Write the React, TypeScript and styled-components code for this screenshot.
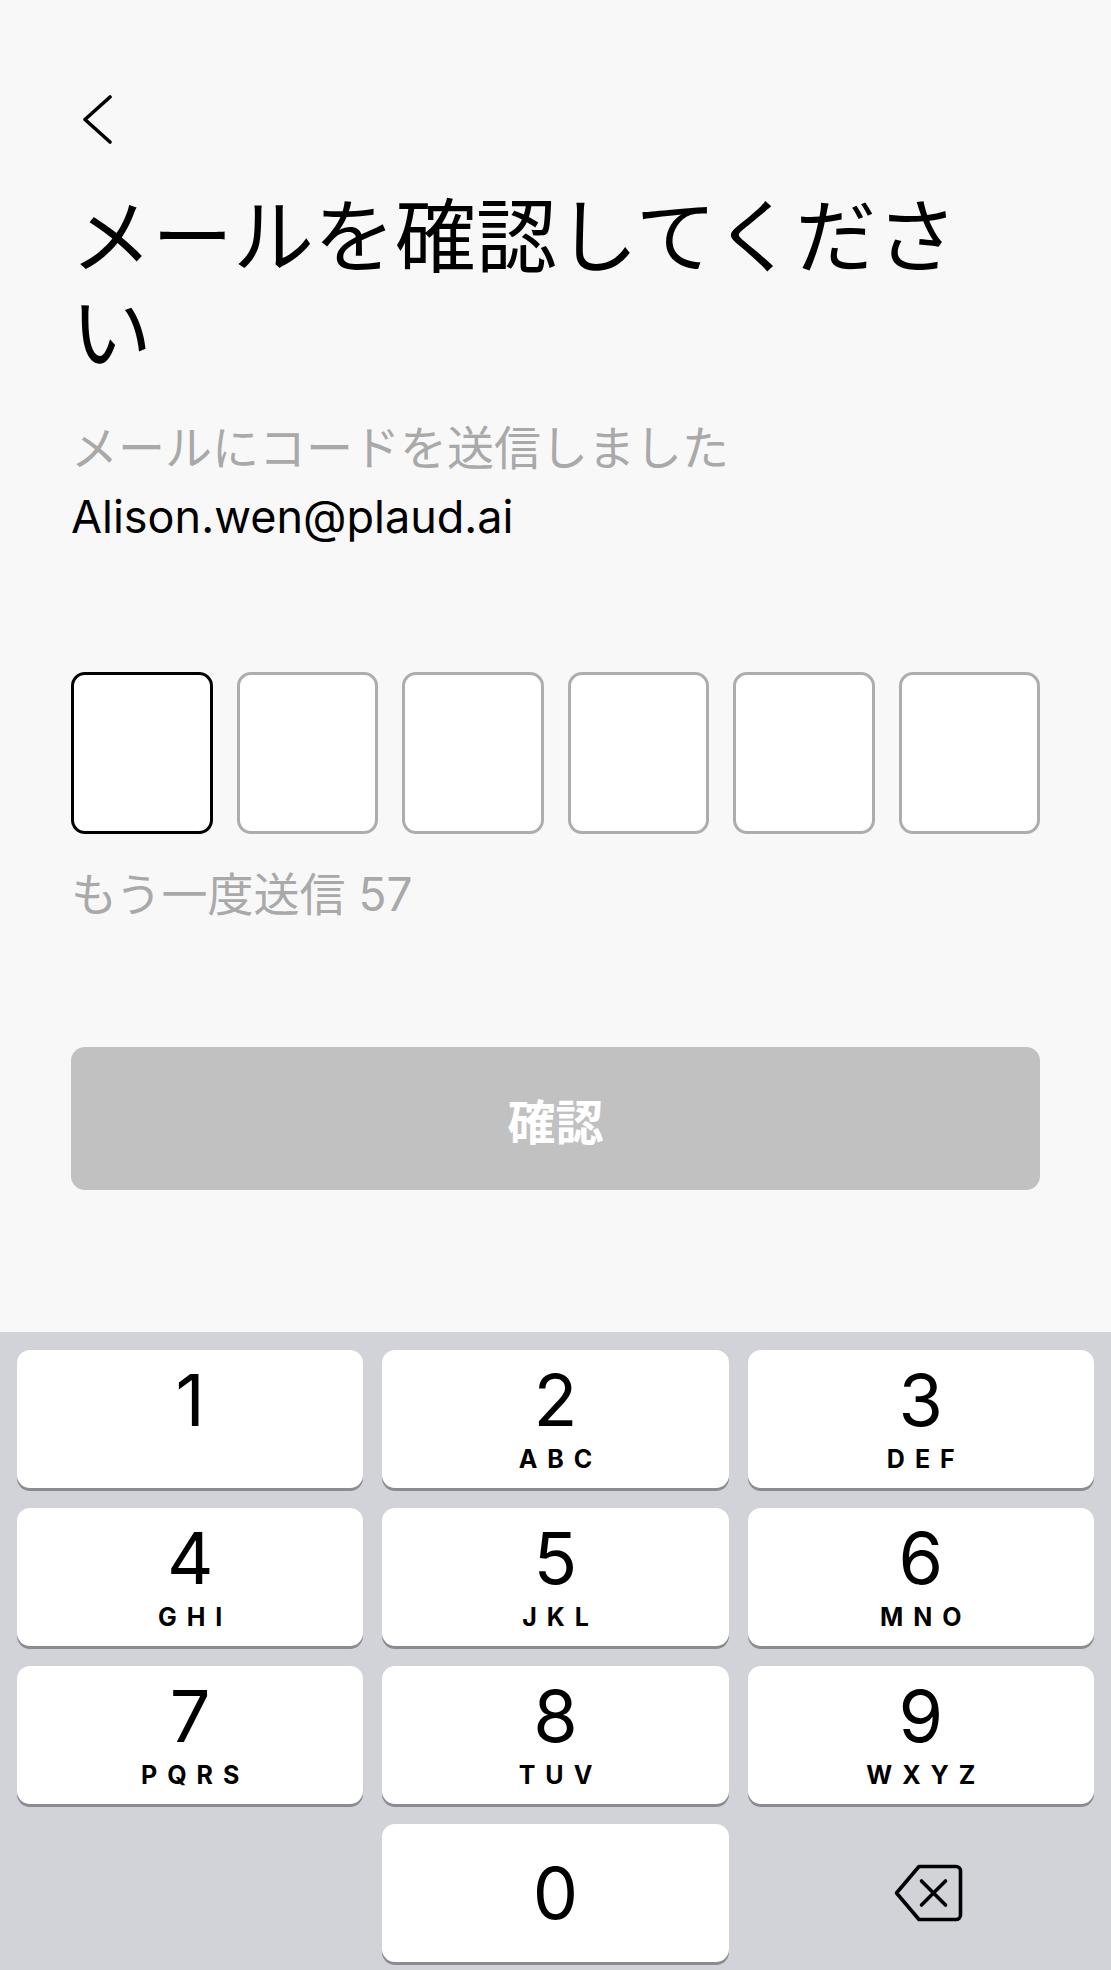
import React from "react";
import styled, { createGlobalStyle } from "styled-components";

const GlobalStyle = createGlobalStyle`
  * { box-sizing: border-box; }
  html, body { margin: 0; padding: 0; background: #f8f8f8; }
  body {
    font-family: "Inter", "Noto Sans CJK JP", sans-serif;
    -webkit-font-smoothing: antialiased;
  }
`;

const Screen = styled.div`
  width: 1111px;
  height: 1970px;
  display: flex;
  flex-direction: column;
  background: #f8f8f8;
  overflow: hidden;
`;

const Main = styled.main`
  flex: 1;
  display: flex;
  flex-direction: column;
  padding: 95px 71px 0;
`;

const BackButton = styled.button`
  width: 44px;
  height: 50px;
  padding: 0;
  border: none;
  background: transparent;
  display: block;
  cursor: pointer;
`;

const Title = styled.h1`
  margin: 38px 0 0;
  padding-right: 40px;
  font-family: "Noto Sans CJK JP", sans-serif;
  font-weight: 400;
  font-size: 81px;
  line-height: 96px;
  color: #000;
`;

const Subtitle = styled.p`
  margin: 38px 0 0;
  font-family: "Noto Sans CJK JP", sans-serif;
  font-size: 47px;
  line-height: 64px;
  color: #a9a9a9;
`;

const Email = styled.p`
  margin: 10px 0 0;
  font-family: "Inter", sans-serif;
  font-size: 45px;
  line-height: 60px;
  color: #000;
`;

const CodeRow = styled.div`
  margin-top: 125px;
  display: flex;
  gap: 24px;
`;

const CodeBox = styled.div<{ $active?: boolean }>`
  flex: 1;
  height: 162px;
  background: #fff;
  border-radius: 14px;
  border: ${(p) => (p.$active ? "3px solid #000" : "3px solid #adadad")};
`;

const Resend = styled.p`
  margin: 28px 0 0;
  font-family: "Inter", "Noto Sans CJK JP", sans-serif;
  font-size: 46px;
  line-height: 64px;
  color: #a9a9a9;
`;

const ConfirmButton = styled.button`
  margin-top: 121px;
  height: 143px;
  width: 100%;
  border: none;
  border-radius: 14px;
  background: #c1c1c1;
  color: #fff;
  font-family: "Noto Sans CJK JP", sans-serif;
  font-weight: 700;
  font-size: 48px;
  display: flex;
  align-items: center;
  justify-content: center;
`;

const Keyboard = styled.div`
  background: #d1d3d9;
  padding: 18px 17px 8px;
  display: grid;
  grid-template-columns: repeat(3, 1fr);
  grid-auto-rows: 138px;
  gap: 20px 19px;
`;

const Key = styled.button<{ $ghost?: boolean }>`
  border: none;
  padding: 0;
  border-radius: 13px;
  background: ${(p) => (p.$ghost ? "transparent" : "#fff")};
  box-shadow: ${(p) => (p.$ghost ? "none" : "0 3px 0 #8b8c90")};
  display: flex;
  flex-direction: column;
  align-items: center;
  justify-content: center;
  color: #000;
  font-family: "Inter", sans-serif;
`;

const Digit = styled.span`
  font-size: 72px;
  line-height: 72px;
  font-weight: 400;
`;

const Letters = styled.span`
  margin-top: 10px;
  margin-bottom: 3px;
  height: 26px;
  font-size: 25px;
  line-height: 26px;
  font-weight: 700;
  letter-spacing: 10px;
  margin-right: -10px;
`;

const BackspaceIcon = styled.svg`
  margin-left: 16px;
`;

const keys: { d: string; l: string }[] = [
  { d: "1", l: "" },
  { d: "2", l: "ABC" },
  { d: "3", l: "DEF" },
  { d: "4", l: "GHI" },
  { d: "5", l: "JKL" },
  { d: "6", l: "MNO" },
  { d: "7", l: "PQRS" },
  { d: "8", l: "TUV" },
  { d: "9", l: "WXYZ" },
];

export default function App() {
  return (
    <>
      <GlobalStyle />
      <Screen>
        <Main>
          <BackButton aria-label="戻る">
            <svg width="44" height="50" viewBox="0 0 44 50">
              <polyline
                points="39,2 14,24.5 39,47"
                fill="none"
                stroke="#000"
                strokeWidth="3.6"
                strokeLinecap="round"
                strokeLinejoin="round"
              />
            </svg>
          </BackButton>
          <Title>メールを確認してください</Title>
          <Subtitle>メールにコードを送信しました</Subtitle>
          <Email>Alison.wen@plaud.ai</Email>
          <CodeRow>
            {[0, 1, 2, 3, 4, 5].map((i) => (
              <CodeBox key={i} $active={i === 0} />
            ))}
          </CodeRow>
          <Resend>もう一度送信 57</Resend>
          <ConfirmButton>確認</ConfirmButton>
        </Main>
        <Keyboard>
          {keys.map((k) => (
            <Key key={k.d}>
              <Digit>{k.d}</Digit>
              <Letters>{k.l}</Letters>
            </Key>
          ))}
          <Key $ghost aria-hidden />
          <Key>
            <Digit>0</Digit>
          </Key>
          <Key $ghost aria-label="削除">
            <BackspaceIcon width="69" height="58" viewBox="0 0 69 58">
              <path
                d="M25 2.5H62a4.5 4.5 0 0 1 4.5 4.5v44a4.5 4.5 0 0 1-4.5 4.5H25L2.5 29Z"
                fill="none"
                stroke="#000"
                strokeWidth="3.6"
                strokeLinejoin="round"
              />
              <path
                d="M27.5 17L51.5 41M51.5 17L27.5 41"
                fill="none"
                stroke="#000"
                strokeWidth="3.6"
                strokeLinecap="round"
              />
            </BackspaceIcon>
          </Key>
        </Keyboard>
      </Screen>
    </>
  );
}
